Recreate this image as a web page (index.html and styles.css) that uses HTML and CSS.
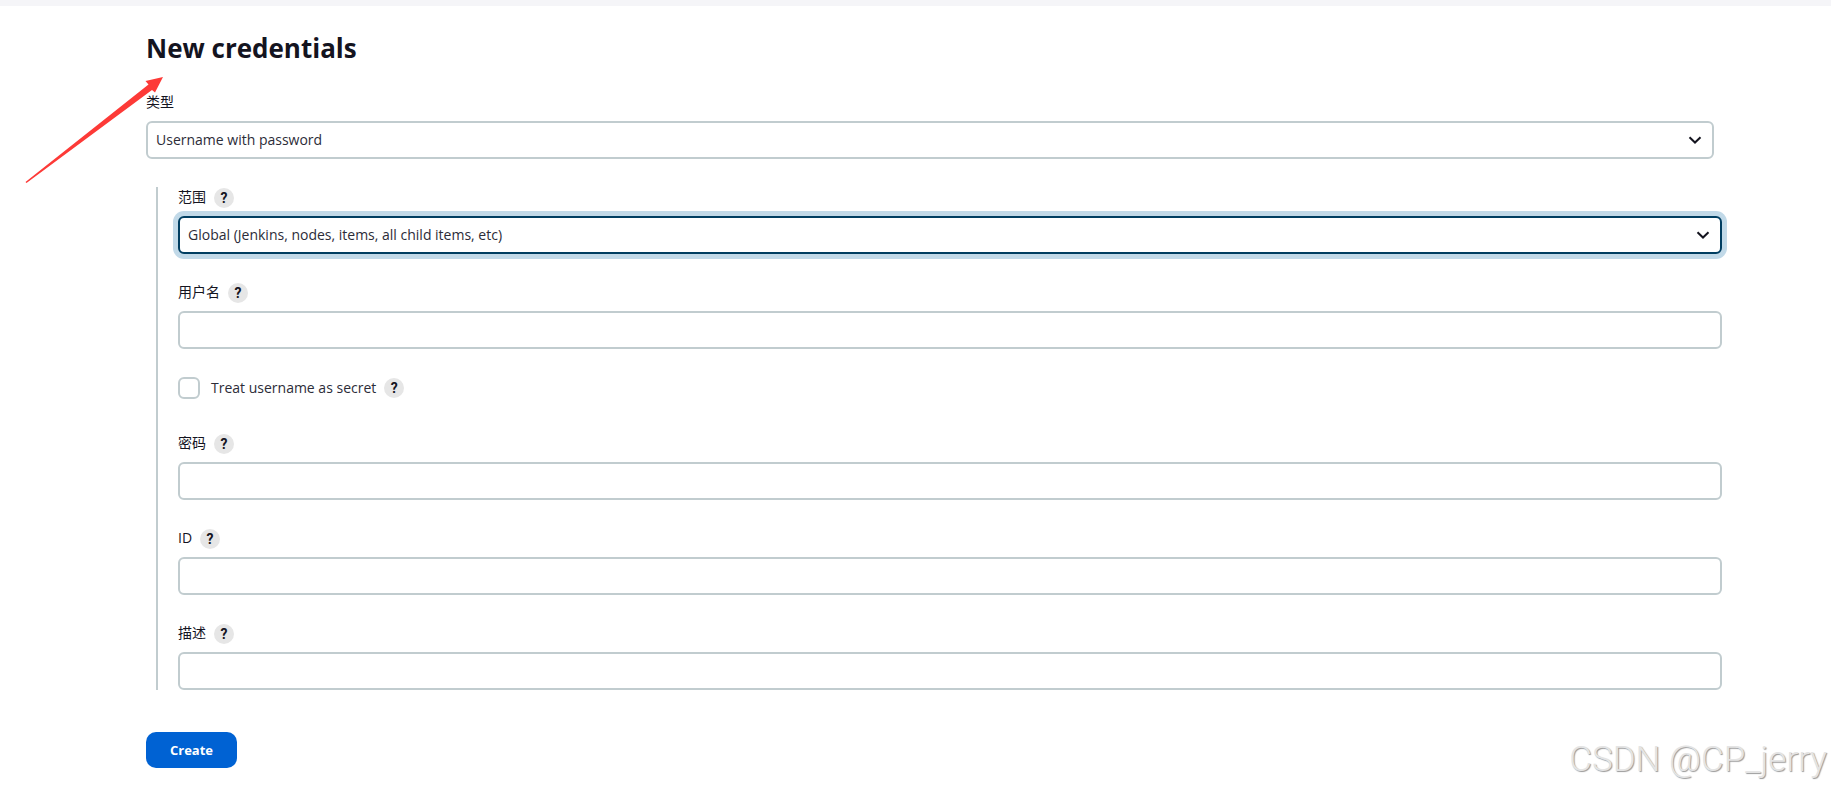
FILE: index.html
```html
<!DOCTYPE html>
<html lang="zh-CN">
<head>
<meta charset="utf-8">
<title>New credentials</title>
<link rel="stylesheet" href="styles.css">
</head>
<body>
<div class="topbar"></div>
<main class="page">
  <h1 class="title">New credentials</h1>
  <form class="form">
    <div class="field">
      <label class="label label-type" for="kind">类型</label>
      <div class="select-wrap">
        <select class="control" id="kind"><option>Username with password</option></select>
        <svg class="chevron" viewBox="0 0 14 8" aria-hidden="true"><path d="M1.5 1.2L7 6.500l5.500-5.300"/></svg>
      </div>
    </div>
    <div class="group">
      <div class="field">
        <div class="label-row"><label class="label" for="scope">范围</label><button class="help" type="button">?</button></div>
        <div class="select-wrap">
          <select class="control active" id="scope"><option>Global (Jenkins, nodes, items, all child items, etc)</option></select>
          <svg class="chevron" viewBox="0 0 14 8" aria-hidden="true"><path d="M1.5 1.2L7 6.500l5.500-5.300"/></svg>
        </div>
      </div>
      <div class="field">
        <div class="label-row"><label class="label" for="username">用户名</label><button class="help" type="button">?</button></div>
        <input class="control" id="username" type="text">
      </div>
      <div class="check-row">
        <input class="checkbox" id="secret" type="checkbox">
        <label class="check-label" for="secret">Treat username as secret</label>
        <button class="help" type="button">?</button>
      </div>
      <div class="field">
        <div class="label-row"><label class="label" for="password">密码</label><button class="help" type="button">?</button></div>
        <input class="control" id="password" type="password">
      </div>
      <div class="field">
        <div class="label-row"><label class="label" for="cred-id">ID</label><button class="help" type="button">?</button></div>
        <input class="control" id="cred-id" type="text">
      </div>
      <div class="field">
        <div class="label-row"><label class="label" for="description">描述</label><button class="help" type="button">?</button></div>
        <input class="control" id="description" type="text">
      </div>
    </div>
    <button class="submit" type="submit">Create</button>
  </form>
</main>
<svg class="arrow" viewBox="0 0 140 108" aria-hidden="true"><path d="M.5 105L123.500 7.500 120.500 4 138 0l-8 15.500-3-2.500L1.500 106z"/></svg>
<div class="watermark">CSDN @CP_jerry</div>
</body>
</html>
```
FILE: styles.css
```css
* { box-sizing: border-box; }
body {
  margin: 0;
  background: #fff;
  color: #14141f;
  font-family: "Open Sans", "Noto Sans CJK SC", sans-serif;
  font-size: 14px;
}
button, input, select { font: inherit; color: inherit; margin: 0; }
.topbar { height: 6px; background: #f5f5f8; }
.page { padding: 24px 117px 24px 146px; }
.title { margin: 0; font-size: 26px; line-height: 36px; font-weight: 700; }
.form { margin-top: 26px; }
.label { display: block; line-height: 20px; }
.label-type { margin-bottom: 9px; }
.select-wrap { display: grid; align-items: center; }
.select-wrap > * { grid-area: 1 / 1; }
.control {
  display: block;
  width: 100%;
  height: 38px;
  padding: 0 8px 2px;
  border: 2px solid #c1cccf;
  border-radius: 6px;
  background: #fff;
  color: #2c2c38;
  appearance: none;
  outline: none;
}
.control.active { border-color: #003e61; box-shadow: 0 0 0 5px #c1d9e8; }
.chevron {
  justify-self: end;
  width: 14px;
  height: 8px;
  margin-right: 12px;
  pointer-events: none;
}
.chevron path { fill: none; stroke: #14141f; stroke-width: 2; }
.group {
  display: flex;
  flex-direction: column;
  gap: 28px;
  margin: 28px -8px 42px 10px;
  padding-left: 20px;
  border-left: 2px solid #c1cccf;
}
.label-row { display: flex; align-items: flex-end; gap: 8px; height: 21px; margin-bottom: 8px; }
.label-row .label { align-self: flex-start; }
.help {
  width: 20px;
  height: 20px;
  padding: 0;
  border: 0;
  border-radius: 50%;
  background: #e6e6e6;
  font-family: Roboto, sans-serif;
  font-weight: 700;
  font-size: 14px;
  line-height: 20px;
}
.check-row { display: flex; align-items: center; height: 22px; margin-bottom: 6px; }
.checkbox {
  appearance: none;
  width: 22px;
  height: 22px;
  border: 2px solid #c1cccf;
  border-radius: 6px;
  background: #fff;
}
.check-label { margin: 0 8px 0 11px; padding-bottom: 2px; color: #2c2c38; }
.submit {
  display: block;
  height: 36px;
  padding: 0 24px;
  border: 0;
  border-radius: 10px;
  background: #0062d3;
  color: #fff;
  font-size: 13px;
  font-weight: 700;
}
.arrow { position: absolute; left: 25px; top: 77px; width: 140px; height: 108px; fill: #fd3a37; }
.watermark {
  position: absolute;
  right: 4px;
  bottom: 12px;
  color: #e4e4e4;
  font: 300 35px/40px Roboto, sans-serif;
  text-shadow: 1px 1px 1px #999;
}
```
